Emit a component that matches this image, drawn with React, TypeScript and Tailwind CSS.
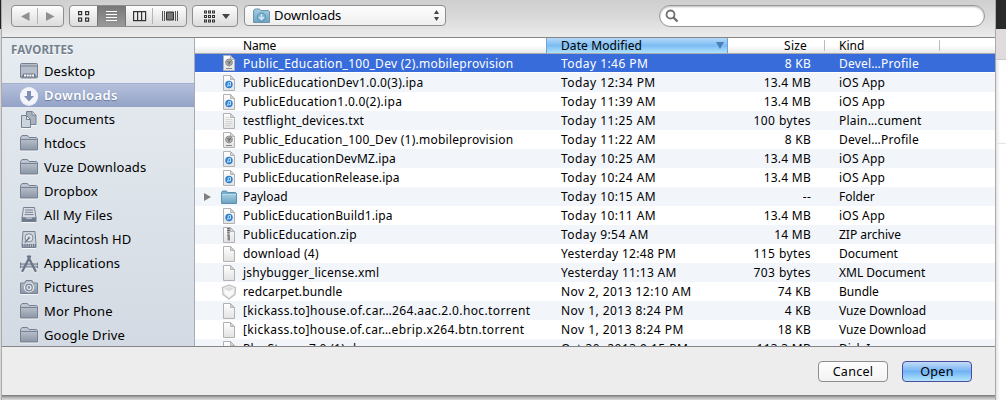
import React from "react";

type FileIconKind = "profile" | "ipa" | "text" | "folder" | "zip" | "blank" | "bundle" | "disk";
type FileRow = { name: string; track?: string; icon: FileIconKind; date: string; size: string; kind: string };

const files: FileRow[] = [
  { name: "Public_Education_100_Dev (2).mobileprovision", track: "tracking-[.26px]", icon: "profile", date: "Today 1:46 PM", size: "8 KB", kind: "Devel…Profile" },
  { name: "PublicEducationDev1.0.0(3).ipa", track: "tracking-[.25px]", icon: "ipa", date: "Today 12:34 PM", size: "13.4 MB", kind: "iOS App" },
  { name: "PublicEducation1.0.0(2).ipa", track: "tracking-[.28px]", icon: "ipa", date: "Today 11:39 AM", size: "13.4 MB", kind: "iOS App" },
  { name: "testflight_devices.txt", track: "tracking-[.25px]", icon: "text", date: "Today 11:25 AM", size: "100 bytes", kind: "Plain…cument" },
  { name: "Public_Education_100_Dev (1).mobileprovision", track: "tracking-[.26px]", icon: "profile", date: "Today 11:22 AM", size: "8 KB", kind: "Devel…Profile" },
  { name: "PublicEducationDevMZ.ipa", track: "tracking-[.14px]", icon: "ipa", date: "Today 10:25 AM", size: "13.4 MB", kind: "iOS App" },
  { name: "PublicEducationRelease.ipa", track: "tracking-[.11px]", icon: "ipa", date: "Today 10:24 AM", size: "13.4 MB", kind: "iOS App" },
  { name: "Payload", icon: "folder", date: "Today 10:15 AM", size: "--", kind: "Folder" },
  { name: "PublicEducationBuild1.ipa", track: "tracking-[.14px]", icon: "ipa", date: "Today 10:11 AM", size: "13.4 MB", kind: "iOS App" },
  { name: "PublicEducation.zip", track: "tracking-[.23px]", icon: "zip", date: "Today 9:54 AM", size: "14 MB", kind: "ZIP archive" },
  { name: "download (4)", track: "tracking-[.24px]", icon: "blank", date: "Yesterday 12:48 PM", size: "115 bytes", kind: "Document" },
  { name: "jshybugger_license.xml", track: "tracking-[.22px]", icon: "blank", date: "Yesterday 11:13 AM", size: "703 bytes", kind: "XML Document" },
  { name: "redcarpet.bundle", track: "tracking-[.12px]", icon: "bundle", date: "Nov 2, 2013 12:10 AM", size: "74 KB", kind: "Bundle" },
  { name: "[kickass.to]house.of.car…264.aac.2.0.hoc.torrent", track: "tracking-[.37px]", icon: "blank", date: "Nov 1, 2013 8:24 PM", size: "4 KB", kind: "Vuze Download" },
  { name: "[kickass.to]house.of.car…ebrip.x264.btn.torrent", track: "tracking-[.35px]", icon: "blank", date: "Nov 1, 2013 8:24 PM", size: "18 KB", kind: "Vuze Download" },
  { name: "PlayStorm_7.0 (1).dmg", track: "tracking-[.3px]", icon: "disk", date: "Oct 30, 2013 9:15 PM", size: "113.3 MB", kind: "Disk Image" },
];

const places = [
  ["Desktop", "desktop"],
  ["Downloads", "downloads"],
  ["Documents", "documents"],
  ["htdocs", "folder"],
  ["Vuze Downloads", "folder"],
  ["Dropbox", "folder"],
  ["All My Files", "allfiles"],
  ["Macintosh HD", "drive"],
  ["Applications", "apps"],
  ["Pictures", "camera"],
  ["Mor Phone", "folder"],
  ["Google Drive", "folder"],
];

function FileIcon({ kind }: { kind: FileIconKind }) {
  if (kind === "folder") {
    return (
      <svg width="16" height="16" viewBox="0 0 16 16">
        <path d="M.5 13.5V3.5L1.5 2h4l1 1.5h8l1 1V14.5H.5z" fill="#78aecb" stroke="#5d8fae" />
        <path d="M1 5.5h14v8.500H1z" fill="url(#folderBlue)" />
        <path d="M1 5.500h14" stroke="#b9dcec" />
      </svg>
    );
  }
  if (kind === "bundle") {
    return (
      <svg width="16" height="16" viewBox="0 0 16 16">
        <path d="M8 1 14.600 3.500 14 10.500 8 15 2 10.500 1.400 3.500z" fill="#ececec" stroke="#bdbdbd" strokeWidth="1.200" strokeLinejoin="round" />
        <path d="M8 3 12.500 4.500 8 7 3.500 4.500z" fill="#dcdcdc" />
        <path d="M3.500 5.500 8 7.500l4.500-2-.5 4L8 13 4 9.500z" fill="#f9f9f9" />
      </svg>
    );
  }
  return (
    <svg width="16" height="16" viewBox="0 0 16 16">
      <path d="M2.500.5h7l4 4v11h-11z" fill="url(#paper)" stroke="#b2b2b2" />
      <path d="M9.500.5v4h4z" fill="#d5d5d5" stroke="#aaa" strokeWidth=".8" />
      {kind === "ipa" && (
        <g>
          <circle cx="8" cy="9.500" r="3.700" fill="#2b7fd0" />
          <path d="M7.200 11V7.900l2.300-.5v3" stroke="#cfe8fb" strokeWidth=".9" fill="none" />
          <circle cx="6.800" cy="11" r=".8" fill="#cfe8fb" />
          <circle cx="9" cy="10.600" r=".8" fill="#cfe8fb" />
        </g>
      )}
      {kind === "profile" && (
        <g>
          <circle cx="8" cy="7.500" r="3.400" fill="#aaa" stroke="#777" strokeWidth="1" strokeDasharray="1.300 .6" />
          <path d="M6.500 6 8 7.500 10 6.500M8 7.500v2" stroke="#555" fill="none" />
          <path d="M5 13.500h6" stroke="#888" />
        </g>
      )}
      {kind === "text" && <path d="M4.500 4.500h4M4.500 6.500h7M4.500 8.500h7M4.500 10.500h7M4.500 12.500h5" stroke="#cdcdcd" strokeWidth=".8" />}
      {kind === "zip" && (
        <g>
          <path d="M7.500 1v8" stroke="#555" strokeWidth="2.600" strokeDasharray="1.200 .6" />
          <rect x="6.500" y="8.500" width="2.500" height="5" fill="#888" />
        </g>
      )}
      {kind === "disk" && <rect x="4.500" y="5" width="7" height="7" fill="#aaa" />}
    </svg>
  );
}

function PlaceIcon({ kind }: { kind: string }) {
  const g = "url(#slate)";
  const s = "#768293";
  return (
    <svg width="18" height="18" viewBox="0 0 18 18" className="shrink-0 drop-shadow-[0_1px_0_rgba(255,255,255,.7)]">
      {kind === "folder" && (
        <g>
          <path d="M.5 14.500V2.500L2 .5h5.500l1.500 2h7.500l1 1v11z" fill="#bcc4cf" stroke={s} />
          <path d="M.5 4.500h17v10.500H.5z" fill={g} stroke={s} />
        </g>
      )}
      {kind === "desktop" && (
        <g>
          <rect x=".5" y=".5" width="17" height="14.500" rx="1" fill="#b5bdc8" stroke={s} />
          <path d="M1 3h16" stroke={s} />
          <path d="M1 14.500 3.500 10.500h11L17 14.500z" fill="#6d7989" />
          <path d="M4 12.500h10" stroke="#fff" strokeWidth="2" strokeDasharray="2 .7" />
        </g>
      )}
      {kind === "downloads" && (
        <g>
          <circle cx="9" cy="9" r="9" fill="#f3f5fa" />
          <path d="M7 4h4v5h3l-5 5.500L4 9h3z" fill="#8090b5" />
        </g>
      )}
      {kind === "documents" && (
        <g>
          <path d="M6.500.5h6l3.500 3.500v9.500H6.500z" fill="#aab2be" stroke={s} />
          <path d="M12 .5V4h4" fill="#dce1e8" stroke={s} />
          <path d="M1.500 4.500h5l4 4v8h-9z" fill="#cbd3dc" stroke={s} />
          <path d="M6.500 4.500v4h4z" fill="#eef1f5" stroke={s} />
        </g>
      )}
      {kind === "allfiles" && (
        <g>
          <path d="M3.500.5h11L16 11H2z" fill="#d8dde5" stroke={s} />
          <path d="M5 3h8M5 5.300h8M4.500 7.600h9" stroke="#77818f" />
          <path d="M1.500 10.500h4l1 1.500h5l1-1.500h4v4.500h-15z" fill="#707c8d" />
        </g>
      )}
      {kind === "drive" && (
        <g>
          <path d="M3 .5h12l1 12v4H2v-4z" fill="#cbd1d9" stroke={s} />
          <circle cx="9" cy="6.800" r="4" fill="#e4e8ed" stroke="#808a98" />
          <circle cx="9" cy="6.800" r="1.500" fill="#9ba4b1" />
          <path d="M9 7 5 11.500" stroke="#69758a" strokeWidth="1.300" />
          <path d="M2 14.500h14" stroke="#717c8c" strokeWidth="3" strokeDasharray="1.500 .7" />
        </g>
      )}
      {kind === "apps" && (
        <g stroke="#6b7788" fill="none" strokeLinecap="round">
          <path d="M.5 8v5M17.500 8v5" strokeWidth="1" />
          <path d="M1 10.500h16" strokeWidth="4" strokeLinecap="butt" />
          <path d="M1.500 10.500h15" stroke="#c3cad4" strokeWidth="2" />
          <path d="M10 1.500 2.500 16" strokeWidth="2.400" />
          <path d="M8 1.500 15.500 16" strokeWidth="2.400" />
        </g>
      )}
      {kind === "camera" && (
        <g>
          <path d="M.5 4h4L6 1.500h6L13.500 4h4v10.500H.5z" fill={g} stroke={s} strokeLinejoin="round" />
          <circle cx="9" cy="8.500" r="4.500" fill="#7d8999" stroke="#eef1f5" strokeWidth="1.200" />
          <circle cx="9" cy="8.500" r="2" fill="#8995a6" stroke="#eef1f5" strokeWidth="1.200" />
        </g>
      )}
    </svg>
  );
}

const raised = "border border-[#8e8e8e] rounded-[4px] bg-linear-to-b from-[#fdfdfd]";

function Toolbar() {
  return (
    <header className="flex h-[38px] shrink-0 items-start border-b border-[#858585] bg-linear-to-b from-[#cfcfcf] via-[#dadada] to-[#ececec] pt-[5px] pl-[9px]">
      <div className={`flex h-[22px] w-[53px] items-center to-[#dcdcdc] ${raised}`}>
        <svg width="51" height="20" viewBox="0 0 51 20">
          <path d="M17.500 6v9L9 10.500zM34 6v9l8.500-4.500z" fill="#909090" />
          <path d="M25.500 2v16" stroke="#b5b5b5" />
        </svg>
      </div>
      <div className={`ml-[5px] flex h-[22px] w-[118px] overflow-hidden to-[#dcdcdc] ${raised}`}>
        <svg width="116" height="20" viewBox="0 0 116 20">
          <g fill="none" stroke="#333" strokeWidth="1.200">
            <path d="M8.600 5.600h3v3h-3zM15.600 5.600h3v3h-3zM8.600 12.100h3v3h-3zM15.600 12.100h3v3h-3z" />
            <path d="M63.600 5.600h12v9h-12zM67.600 5.600v9M71.600 5.600v9" />
          </g>
          <path d="M27 0h29v20H27z" fill="url(#pressed)" />
          <path d="M27.500 0v20M55.500 0v20" stroke="#747474" />
          <path d="M36 5.500h11M36 8.500h11M36 11.500h11M36 14.500h11" stroke="#fff" />
          <path d="M82.500 2v16" stroke="#b5b5b5" />
          <path d="M96.500 6h7v8h-7z" fill="#777" stroke="#333" />
          <path d="M92.500 5v10M94.500 5v10M105.500 5v10M107.500 5v10" stroke="#555" />
        </svg>
      </div>
      <div className={`ml-[5px] flex h-[22px] w-[46px] to-[#dcdcdc] ${raised}`}>
        <svg width="44" height="20" viewBox="0 0 44 20">
          <path d="M11 6h11M11 10.500h11M11 15h11" stroke="#333" strokeWidth="3" strokeDasharray="3 1" />
          <path d="M12 6h1M16 6h1M20 6h1M12 10.500h1M16 10.500h1M20 10.500h1M12 15h1M16 15h1M20 15h1" stroke="#ddd" />
          <path d="M29 8h8L33 13z" fill="#444" />
        </svg>
      </div>
      <div className={`ml-[6px] flex h-[21px] w-[202px] items-center pl-2 pr-1 text-[13px] to-[#efefef] ${raised}`}>
        <svg width="17" height="16" viewBox="0 0 17 16" className="mr-1">
          <path d="M.5 14.500v-12L2 1h4.500L8 2.500h7.500l1 1v11z" fill="url(#folderBlue)" stroke="#6e94a9" />
          <circle cx="8.500" cy="9" r="4.200" fill="#7eb3cf" stroke="#5489a8" strokeWidth=".8" />
          <path d="M8.500 6v5M6 9l2.500 2.500L11 9" fill="none" stroke="#d0eaf5" strokeWidth="1.400" />
        </svg>
        <span className="grow tracking-[-.1px]">Downloads</span>
        <svg width="9" height="13" viewBox="0 0 9 13">
          <path d="M2 5h5L4.500 1zM2 8h5L4.500 12z" fill="#444" />
        </svg>
      </div>
      <div className="ml-auto mr-[10px] flex h-[22px] w-[326px] items-center rounded-full border border-[#979797] bg-white pl-[5px] shadow-[inset_0_1px_2px_#bbb]">
        <svg width="14" height="14" viewBox="0 0 14 14" fill="none" stroke="#707070">
          <circle cx="5.500" cy="5.500" r="4" strokeWidth="1.800" />
          <path d="M8.500 8.500 12.500 12.500" strokeWidth="2.400" />
        </svg>
      </div>
    </header>
  );
}

function Sidebar() {
  return (
    <nav className="w-[193px] shrink-0 overflow-hidden border-r border-[#a9adb3] bg-linear-to-b from-[#e6ecf0] to-[#d3dae3]">
      <h2 className="h-[21px] pl-[9px] pt-px text-[11.500px] leading-[22px] font-bold tracking-[.1px] text-[#74808f] [text-shadow:0_1px_0_#fff]">FAVORITES</h2>
      {places.map(([label, icon]) => (
        <div
          key={label}
          className={`flex h-6 items-center gap-[6px] pl-[18px] text-[13px] ${
            label === "Downloads"
              ? "border-t border-[#a3afd0] bg-linear-to-b from-[#b5c0dc] to-[#93a2c6] font-semibold tracking-[.4px] text-white [text-shadow:0_1px_1px_#66759a]"
              : "pt-[2px] tracking-[.12px]"
          }`}
        >
          <PlaceIcon kind={icon} />
          <span>{label}</span>
        </div>
      ))}
    </nav>
  );
}

function FileList() {
  return (
    <main className="flex min-w-0 grow flex-col overflow-hidden bg-white text-[12px]">
      <div className="flex h-4 shrink-0 border-b border-[#ababab] bg-linear-to-b from-white from-50% to-[#e9e9e9] leading-[15px]">
        <div className="w-[351px] pl-12 tracking-[-.2px]">Name</div>
        <div className="flex w-[182px] items-center justify-between border-x border-[#6ea2dc] bg-linear-to-b from-[#b5d9f8] via-[#7dbcf3] to-[#aee3fc] pr-[3px] pl-[14px] tracking-[.1px]">
          Date Modified
          <svg width="8" height="7" viewBox="0 0 8 7">
            <path d="M0 0h8L4 7z" fill="#4b7fb9" />
          </svg>
        </div>
        <div className="w-[79px] text-right tracking-[.2px]">Size</div>
        <div className="ml-[17px] h-[11px] w-px self-center bg-[#bbb]" />
        <div className="w-[114px] pl-[14px]">Kind</div>
        <div className="h-[11px] w-px self-center bg-[#bbb]" />
      </div>
      <div className="overflow-hidden">
        {files.map((file, i) => (
          <div
            key={i}
            className={`flex h-[19px] items-center whitespace-nowrap leading-[19px] ${
              i === 0 ? "border-b border-white bg-[#386cda] text-white" : i % 2 ? "bg-[#f2f6fb]" : "bg-white"
            }`}
          >
            <div className="flex w-[26px] pl-[8px]">
              {file.icon === "folder" && (
                <svg width="9" height="10" viewBox="0 0 9 10">
                  <path d="M1 1v8l7-4z" fill="#818181" />
                </svg>
              )}
            </div>
            <div className="w-[22px]">
              <FileIcon kind={file.icon} />
            </div>
            <div className={`w-[318px] ${file.track ?? ""}`}>{file.name}</div>
            <div className={`w-[150px] ${file.date.startsWith("Yesterday") ? "tracking-[.3px]" : "tracking-[.45px]"}`}>{file.date}</div>
            <div className={`w-[100px] text-right ${file.size.endsWith("bytes") ? "tracking-[.4px]" : "tracking-[.25px]"}`}>{file.size}</div>
            <div className={`ml-[28px] ${file.kind.includes("…") || file.kind === "iOS App" ? "tracking-[.22px]" : ""}`}>{file.kind}</div>
          </div>
        ))}
      </div>
    </main>
  );
}

export default function App() {
  return (
    <div className="flex h-[400px] w-[1006px] overflow-hidden bg-[#eee] font-['Noto_Sans',sans-serif] text-black">
      <svg width="0" height="0" className="absolute">
        <defs>
          <linearGradient id="folderBlue" x2="0" y2="1"><stop stopColor="#a3cee2" /><stop offset="1" stopColor="#6da4c3" /></linearGradient>
          <linearGradient id="paper" x2="0" y2="1"><stop stopColor="#fff" /><stop offset="1" stopColor="#e2e2e2" /></linearGradient>
          <linearGradient id="slate" x2="0" y2="1"><stop stopColor="#b7bfca" /><stop offset="1" stopColor="#8a95a4" /></linearGradient>
          <linearGradient id="pressed" x2="0" y2="1"><stop stopColor="#777" /><stop offset="1" stopColor="#999" /></linearGradient>
        </defs>
      </svg>
      <div className="w-0.5 shrink-0 border-r border-[#aaa] bg-[#d8d8d8]">
        <div className="h-[29px] bg-[#222]" />
      </div>
      <div className="flex w-[993px] shrink-0 flex-col">
        <section className="flex h-[395px] shrink-0 flex-col">
          <Toolbar />
          <div className="flex h-[309px] shrink-0 border-b border-[#858585]">
            <Sidebar />
            <FileList />
          </div>
          <footer className="flex grow items-start justify-end gap-[14px] bg-[#ededed] pt-[14px] pr-[23px] text-[12.500px] tracking-[.3px]">
            <button className={`h-[21px] w-[70px] leading-[18px] to-[#f3f3f3] ${raised}`}>Cancel</button>
            <button className="h-[21px] w-[70px] rounded-[4px] border border-[#4c4ca0] bg-linear-to-b from-[#c2dbf6] via-[#70b2f4] to-[#b2e5fd] leading-[18px]">Open</button>
          </footer>
        </section>
        <div className="h-[5px] bg-linear-to-b from-[#777] via-[#b5b5b5] to-[#dcdcdc]" />
      </div>
      <div className="flex grow flex-col border-l border-[#aaa] bg-white">
        <div className="h-[29px] bg-[#292929]" />
        <div className="h-[31px] border-b border-[#cbc7c8] bg-[#e0dcdd]" />
        <div className="h-[84px] border-b border-[#e5e5e5] bg-linear-to-r from-[#e4e4e4] to-white to-40%" />
        <div className="grow bg-linear-to-r from-[#e4e4e4] to-white to-40%" />
      </div>
    </div>
  );
}
